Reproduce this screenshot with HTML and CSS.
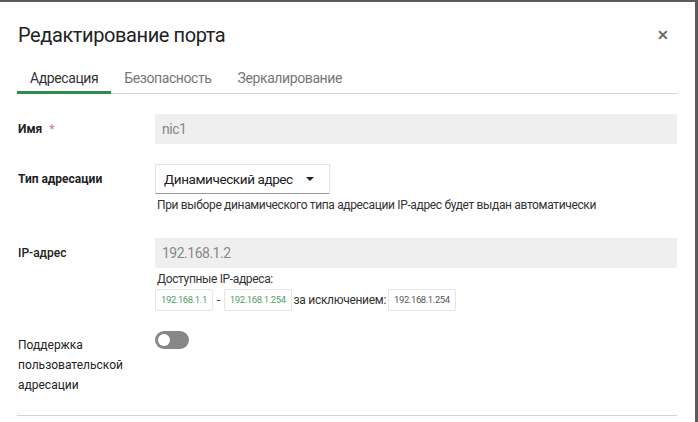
FILE: index.html
```html
<!DOCTYPE html>
<html lang="ru">
<head>
    <meta charset="UTF-8">
    <meta name="viewport" content="width=device-width, initial-scale=1.0">
    <title>Редактирование порта</title>
    <link rel="stylesheet" href="styles.css">
</head>
<body>
    <div class="modal">
        <div class="modal-header">
            <h1>Редактирование порта</h1>
            <span class="close">&#x2715;</span>
        </div>

        <div class="tabs">
            <div class="tab active">Адресация</div>
            <div class="tab">Безопасность</div>
            <div class="tab">Зеркалирование</div>
        </div>

        <form class="port-form">
            <div class="row">
                <label class="label required">Имя <span class="star">*</span></label>
                <div class="field">
                    <div class="input readonly">nic1</div>
                </div>
            </div>

            <div class="row with-hint">
                <label class="label required">Тип адресации</label>
                <div class="field">
                    <div class="select">
                        <span>Динамический адрес</span>
                        <span class="caret"></span>
                    </div>
                    <div class="hint">При выборе динамического типа адресации IP-адрес будет выдан автоматически</div>
                </div>
            </div>

            <div class="row">
                <label class="label medium">IP-адрес</label>
                <div class="field">
                    <div class="input readonly">192.168.1.2</div>
                    <div class="hint">Доступные IP-адреса:</div>
                    <div class="ranges">
                        <span class="chip green">192.168.1.1</span>
                        <span class="dash">-</span>
                        <span class="chip green">192.168.1.254</span>
                        <span class="except">за исключением:</span>
                        <span class="chip">192.168.1.254</span>
                    </div>
                </div>
            </div>

            <div class="row last">
                <label class="label multi">Поддержка пользовательской адресации</label>
                <div class="field">
                    <span class="toggle"></span>
                </div>
            </div>
        </form>
    </div>
</body>
</html>
```

FILE: styles.css
```css
* {
    margin: 0;
    padding: 0;
    box-sizing: border-box;
}

body {
    font-family: Roboto, "Liberation Sans", sans-serif;
    background: #5b5b5b;
    color: #222;
    height: 422px;
    overflow: hidden;
}

.modal {
    width: 695px;
    height: 420px;
    margin-top: 2px;
    background: #fff;
    padding: 18px 18px 0 17px;
}

.modal-header {
    display: flex;
    align-items: center;
    justify-content: space-between;
    height: 30px;
    padding-left: 1px;
}

.modal-header h1 {
    font-size: 20px;
    font-weight: 400;
    letter-spacing: -0.4px;
    color: #222;
}

.close {
    font-size: 14px;
    font-weight: 700;
    color: #6b6b6b;
    margin-right: 8px;
}

.tabs {
    display: flex;
    margin-top: 10px;
    height: 34px;
    border-bottom: 1px solid #d4d4d4;
}

.tab {
    height: 34px;
    margin-bottom: -1px;
    padding: 0 13px;
    line-height: 36px;
    font-size: 14px;
    letter-spacing: -0.4px;
    color: #777;
    border-bottom: 3px solid transparent;
}

.tab.active {
    color: #333;
    border-bottom-color: #2e8b4a;
}

.port-form {
    padding-top: 20px;
    border-bottom: 1px solid #d4d4d4;
}

.row {
    display: grid;
    grid-template-columns: 138px 1fr;
    margin-bottom: 20px;
}

.row.with-hint {
    margin-bottom: 25px;
}

.row.last {
    margin-bottom: 20px;
}

.label {
    font-size: 12px;
    line-height: 30px;
    padding-left: 1px;
    color: #222;
}

.label.required {
    font-weight: 700;
}

.label.medium {
    font-weight: 500;
}

.label.multi {
    line-height: 20px;
    margin-top: 4px;
    padding-right: 10px;
}

.star {
    color: #e56b86;
    font-weight: 400;
    margin-left: 4px;
}

.input {
    height: 30px;
    line-height: 30px;
    padding: 0 7px;
    font-size: 14px;
    letter-spacing: -0.5px;
}

.input.readonly {
    background: #efefef;
    color: #888;
}

.select {
    display: flex;
    align-items: center;
    justify-content: space-between;
    width: 175px;
    height: 30px;
    padding: 0 15px 0 8px;
    font-size: 13.5px;
    letter-spacing: -0.4px;
    color: #222;
    border: 1px solid #e4e4e4;
    border-bottom-color: #9a9a9a;
}

.caret {
    width: 0;
    height: 0;
    border-left: 4px solid transparent;
    border-right: 4px solid transparent;
    border-top: 4px solid #222;
}

.hint {
    font-size: 12px;
    line-height: 16px;
    margin-top: 3px;
    padding-left: 2px;
    letter-spacing: -0.35px;
    color: #333;
}

.ranges {
    display: flex;
    align-items: center;
    margin-top: 2px;
    font-size: 12px;
    letter-spacing: -0.3px;
    color: #333;
}

.chip {
    height: 22px;
    line-height: 20px;
    padding: 0 5px;
    font-size: 9.5px;
    letter-spacing: -0.4px;
    color: #555;
    border: 1px solid #e6e6e6;
    border-radius: 2px;
}

.chip.green {
    color: #4f9f63;
}

.dash {
    margin: 0 4px;
}

.except {
    margin: 0 2px;
}

.toggle {
    display: block;
    position: relative;
    width: 34px;
    height: 18px;
    border-radius: 9px;
    background: #888;
}

.toggle::after {
    content: '';
    position: absolute;
    left: 3px;
    top: 3px;
    width: 12px;
    height: 12px;
    border-radius: 50%;
    background: #fff;
}
```
